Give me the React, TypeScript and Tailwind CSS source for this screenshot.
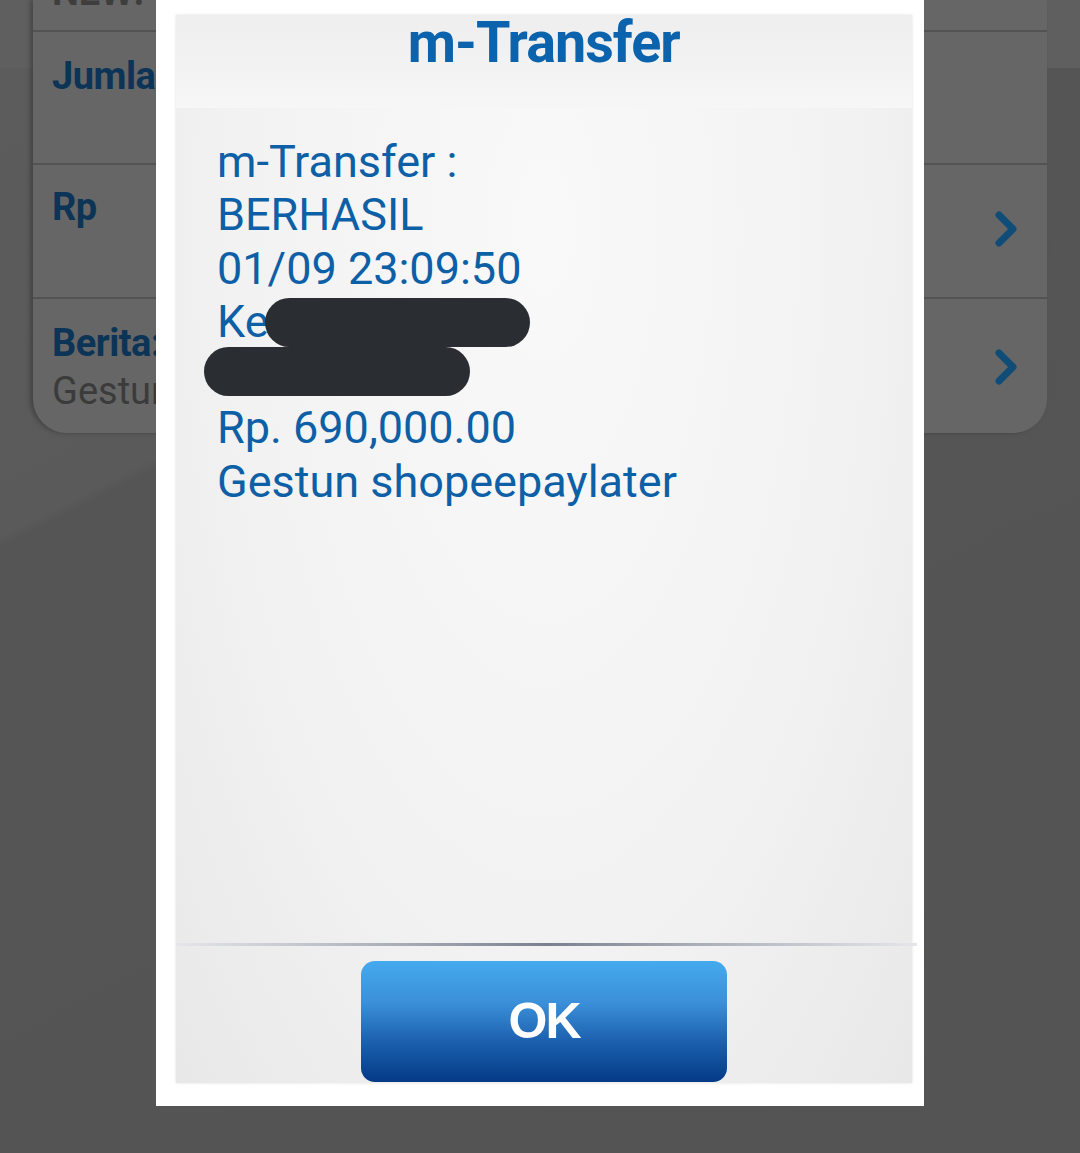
const lines = ["m-Transfer :", "BERHASIL", "01/09 23:09:50", "Ke", "\u00a0", "Rp. 690,000.00", "Gestun shopeepaylater"];

function Chevron() {
  return (
    <svg width="30" height="40" viewBox="0 0 30 40" className="shrink-0">
      <polyline points="8,6 22,20 8,34" fill="none" stroke="#0f4c78" strokeWidth="7" strokeLinecap="round" strokeLinejoin="round" />
    </svg>
  );
}

export default function App() {
  return (
    <div className="relative h-[1153px] w-[1080px] overflow-hidden bg-[linear-gradient(153deg,#5c5c5c_0%,#5a5a5a_31.5%,#555555_32.2%,#545454_100%)] font-['Roboto',sans-serif]">
      {/* page behind the dialog, dimmed */}
      <div className="h-[68px] w-full bg-[#5f5f5f]" />
      <div className="absolute left-[33px] top-0 w-[1014px] overflow-hidden rounded-b-[34px] bg-[#666666] shadow-[-3px_0_4px_rgba(0,0,0,0.25)]">
        <div className="flex h-[32px] items-start overflow-hidden border-b-2 border-[#535353] pl-[19px]">
          <span className="-mt-[27px] text-[38px] font-bold leading-none text-[#3e3e3e]">NEW: 0</span>
        </div>
        <div className="h-[133px] border-b-2 border-[#535353] pl-[19px] pt-[16px]">
          <span className="text-[38px] font-bold leading-[56px] tracking-[-0.5px] text-[#0c3457]">Jumlah</span>
        </div>
        <div className="flex h-[134px] items-start justify-between border-b-2 border-[#535353] pl-[19px] pr-[26px] pt-[18px]">
          <span className="text-[38px] font-bold leading-[48px] tracking-[-0.5px] text-[#0c3457]">Rp</span>
          <div className="mt-[26px]">
            <Chevron />
          </div>
        </div>
        <div className="flex h-[134px] items-start justify-between pl-[19px] pr-[26px] pt-[20px]">
          <div className="flex flex-col">
            <span className="text-[38px] font-bold leading-[48px] tracking-[-0.5px] text-[#0c3457]">Berita:</span>
            <span className="text-[38px] leading-[48px] text-[#3b3b3b]">Gestun shopeepaylater</span>
          </div>
          <div className="mt-[28px]">
            <Chevron />
          </div>
        </div>
      </div>

      {/* dialog */}
      <div className="absolute left-[156px] top-0 h-[1106px] w-[768px] bg-white pb-[23px] pl-[20px] pr-[12px] pt-[15px]">
        <div className="relative flex h-full flex-col bg-[radial-gradient(ellipse_at_50%_20%,#f9f9f9_0%,#f2f2f2_60%,#e8e8e8_100%)] shadow-[0_0_3px_rgba(0,0,0,0.12)]">
          <div className="flex h-[93px] items-start justify-center border-b border-[#f7f7f7] bg-[linear-gradient(#eeeeee,#f6f6f6)]">
            <h1 className="-mt-[4px] scale-x-[0.96] text-[58px] font-bold leading-[62px] tracking-[-1px] text-[#0b62ad]">m-Transfer</h1>
          </div>

          <div className="relative flex-1 pl-[41px] pt-[27px]">
            {lines.map((l, i) => (
              <p key={i} className="text-[45px] leading-[53.3px] text-[#0d5fa6]">
                {l}
              </p>
            ))}
            <div className="absolute left-[89px] top-[190px] h-[49px] w-[265px] rounded-full bg-[#2a2e33]" />
            <div className="absolute left-[28px] top-[239px] h-[49px] w-[266px] rounded-full bg-[#2a2e33]" />
          </div>

          <div className="-mr-[5px] h-[3px] bg-[linear-gradient(90deg,#e4e6ea_0%,#a9adb7_30%,#7b8091_50%,#a9adb7_70%,#e4e6ea_100%)]" />

          <div className="flex h-[137px] justify-center pt-[15px]">
            <button className="flex h-[121px] w-[366px] items-center justify-center rounded-[14px] bg-[linear-gradient(#45aaee_0%,#3a8fd8_35%,#1d62b0_65%,#033a86_100%)] font-['Liberation_Sans',sans-serif] text-[50px] font-bold tracking-[-2px] text-white">
              OK
            </button>
          </div>
        </div>
      </div>
    </div>
  );
}
